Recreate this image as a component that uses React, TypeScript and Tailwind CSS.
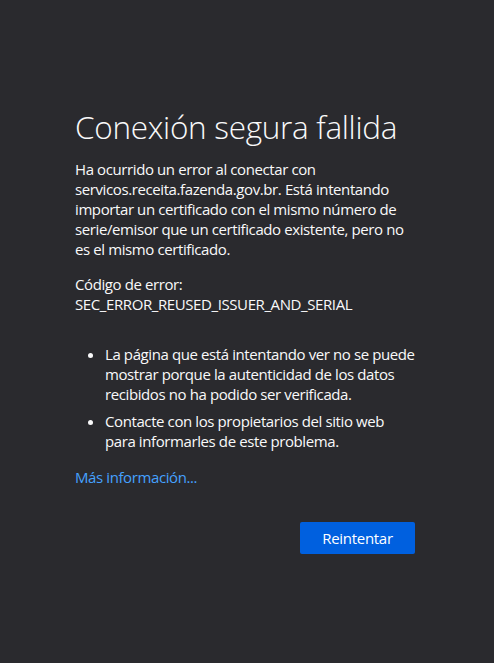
import React from "react";

export default function App() {
  return (
    <div
      className="min-h-[663px] w-full bg-[#2a2a2e] text-[#f9f9fa]"
      style={{ fontFamily: '"Open Sans", "Noto Sans", sans-serif' }}
    >
      <div className="ml-[75px] w-[340px] pt-[104px]">
        <h1 className="text-[31.5px] font-light leading-[46px] tracking-[-0.3px] text-[#f9f9fa]">
          Conexión segura fallida
        </h1>
        <div className="mt-[9px] text-[15px] leading-[20px] tracking-[-0.4px]">
          <p>
            Ha ocurrido un error al conectar con
            <br />
            servicos.receita.fazenda.gov.br. Está intentando
            <br />
            importar un certificado con el mismo número de
            <br />
            serie/emisor que un certificado existente, pero no
            <br />
            es el mismo certificado.
          </p>
          <p className="mt-[15px]">
            Código de error:
            <br />
            SEC_ERROR_REUSED_ISSUER_AND_SERIAL
          </p>
          <ul className="mt-[30px] flex flex-col gap-[7px] pl-[30px]">
            <li className="list-disc">
              La página que está intentando ver no se puede
              <br />
              mostrar porque la autenticidad de los datos
              <br />
              recibidos no ha podido ser verificada.
            </li>
            <li className="list-disc">
              Contacte con los propietarios del sitio web
              <br />
              para informarles de este problema.
            </li>
          </ul>
          <p className="mt-[16px]">
            <a className="text-[#45a1ff]">Más información...</a>
          </p>
        </div>
        <div className="mt-[35px] flex justify-end">
          <button className="h-[32px] w-[115px] rounded-[2px] bg-[#0060df] text-[15px] text-white tracking-[-0.3px]">
            Reintentar
          </button>
        </div>
      </div>
    </div>
  );
}
